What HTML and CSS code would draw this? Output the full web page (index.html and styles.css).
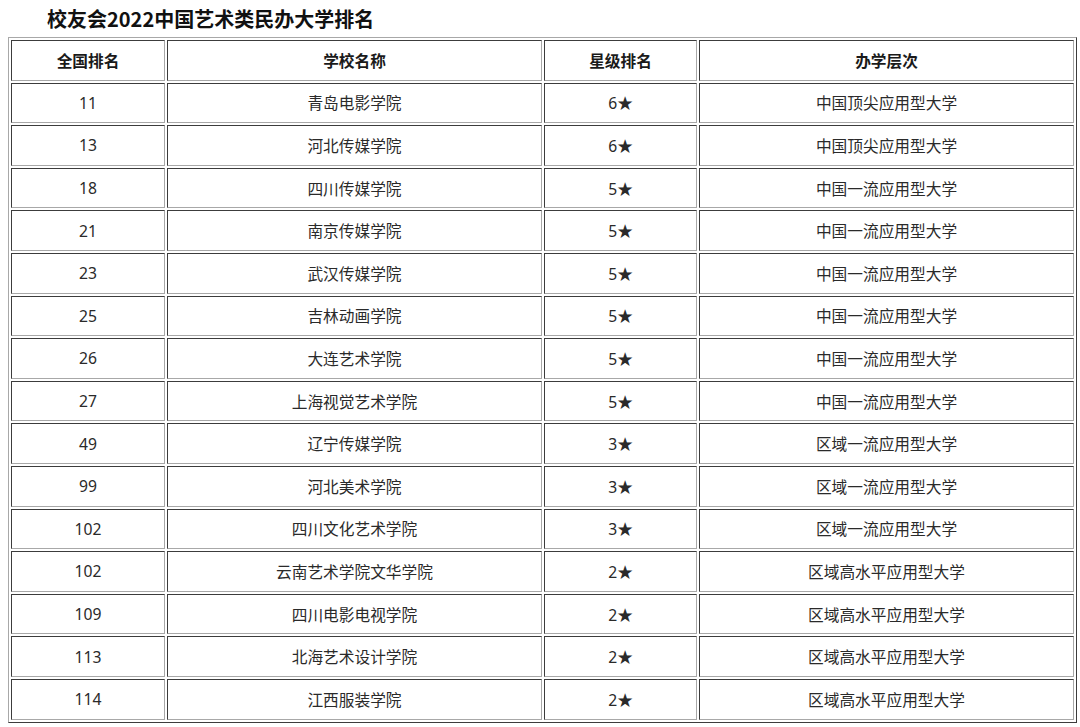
FILE: index.html
```html
<!DOCTYPE html>
<html lang="zh-CN">
<head>
<meta charset="utf-8">
<title>校友会2022中国艺术类民办大学排名</title>
<link rel="stylesheet" href="styles.css">
</head>
<body>
<h1 class="title">校友会2022中国艺术类民办大学排名</h1>
<table class="rank">
  <colgroup>
    <col class="c1"><col class="c2"><col class="c3"><col class="c4">
  </colgroup>
  <thead>
    <tr><th>全国排名</th><th>学校名称</th><th>星级排名</th><th>办学层次</th></tr>
  </thead>
  <tbody>
    <tr><td>11</td><td>青岛电影学院</td><td>6★</td><td>中国顶尖应用型大学</td></tr>
    <tr><td>13</td><td>河北传媒学院</td><td>6★</td><td>中国顶尖应用型大学</td></tr>
    <tr><td>18</td><td>四川传媒学院</td><td>5★</td><td>中国一流应用型大学</td></tr>
    <tr><td>21</td><td>南京传媒学院</td><td>5★</td><td>中国一流应用型大学</td></tr>
    <tr><td>23</td><td>武汉传媒学院</td><td>5★</td><td>中国一流应用型大学</td></tr>
    <tr><td>25</td><td>吉林动画学院</td><td>5★</td><td>中国一流应用型大学</td></tr>
    <tr><td>26</td><td>大连艺术学院</td><td>5★</td><td>中国一流应用型大学</td></tr>
    <tr><td>27</td><td>上海视觉艺术学院</td><td>5★</td><td>中国一流应用型大学</td></tr>
    <tr><td>49</td><td>辽宁传媒学院</td><td>3★</td><td>区域一流应用型大学</td></tr>
    <tr><td>99</td><td>河北美术学院</td><td>3★</td><td>区域一流应用型大学</td></tr>
    <tr><td>102</td><td>四川文化艺术学院</td><td>3★</td><td>区域一流应用型大学</td></tr>
    <tr><td>102</td><td>云南艺术学院文华学院</td><td>2★</td><td>区域高水平应用型大学</td></tr>
    <tr><td>109</td><td>四川电影电视学院</td><td>2★</td><td>区域高水平应用型大学</td></tr>
    <tr><td>113</td><td>北海艺术设计学院</td><td>2★</td><td>区域高水平应用型大学</td></tr>
    <tr><td>114</td><td>江西服装学院</td><td>2★</td><td>区域高水平应用型大学</td></tr>
  </tbody>
</table>
</body>
</html>
```
FILE: styles.css
```css
html, body {
  margin: 0;
  padding: 0;
  background: #ffffff;
}
body {
  padding: 0 8px;
  font-family: "Noto Sans", "Noto Sans CJK SC", sans-serif;
  color: #222222;
}
.title {
  margin: 0;
  padding: 5px 0 0 39px;
  height: 37px;
  box-sizing: border-box;
  font-family: "Noto Sans CJK SC", sans-serif;
  font-size: 20px;
  font-weight: 700;
  line-height: 28px;
  color: #111111;
}
.rank {
  width: 1068px;
  border-collapse: separate;
  border-spacing: 2px;
  border-style: solid;
  border-width: 1px;
  border-color: #a8a8a8 #3c3c3c #3c3c3c #a8a8a8;
  table-layout: fixed;
}
.c1 { width: 154px; }
.c2 { width: 375px; }
.c3 { width: 153px; }
.c4 { width: 375px; }
.rank th,
.rank td {
  height: 38.6px;
  padding: 0;
  text-align: center;
  vertical-align: middle;
  font-size: 15.7px;
  border-style: solid;
  border-width: 1px;
  border-color: #3c3c3c #a8a8a8 #a8a8a8 #3c3c3c;
}
.rank th {
  font-family: "Noto Sans CJK SC", sans-serif;
  font-weight: 700;
  color: #1a1a1a;
}
.rank td {
  font-weight: 400;
  color: #2a2a2a;
}
```
